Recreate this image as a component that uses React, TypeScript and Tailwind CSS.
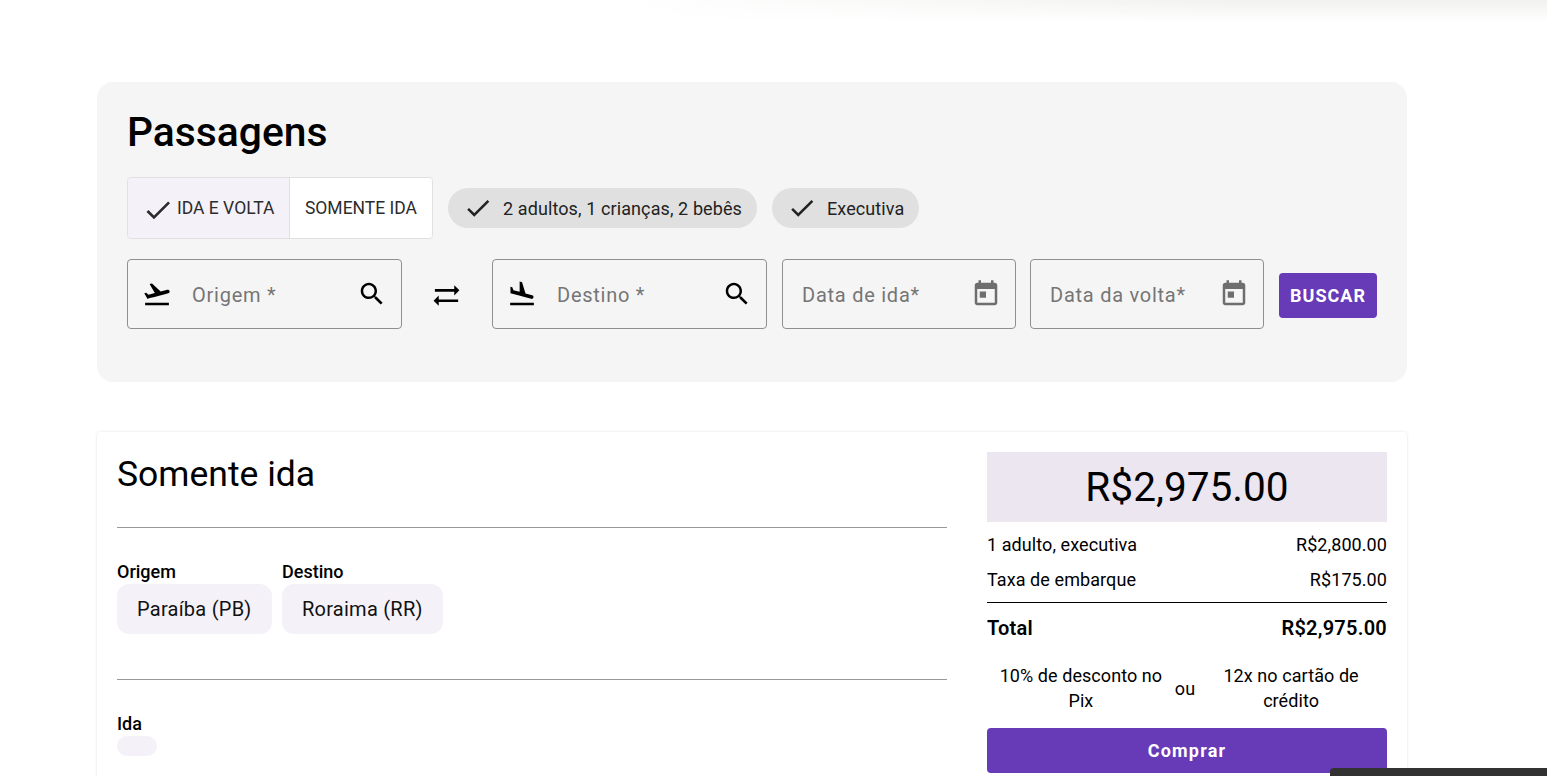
const Ic = ({ d, size, className = "" }: { d: string; size: number; className?: string }) => (
  <svg viewBox="0 0 24 24" width={size} height={size} fill="currentColor" className={"shrink-0 " + className}>
    <path d={d} />
  </svg>
);
const Check = ({ size = 30, className = "" }: { size?: number; className?: string }) => (
  <svg viewBox="0 0 24 24" width={size} height={size} fill="none" stroke="currentColor" strokeWidth={2} className={"shrink-0 " + className}>
    <path d="M4.1 12.7 9 17.6 20.3 6.3" />
  </svg>
);
const TAKEOFF = "M2.5 19h19v2h-19v-2zm19.57-9.36c-.21-.8-1.04-1.28-1.84-1.06L14.92 10l-6.9-6.43-1.93.51 4.14 7.17-4.97 1.33-1.97-1.54-1.45.39 2.59 4.49s7.12-1.9 16.57-4.43c.81-.23 1.28-1.05 1.07-1.85z";
const LAND = "M2.5 19h19v2h-19v-2zm7.18-5.73l4.35 1.16 5.31 1.42c.8.21 1.62-.26 1.84-1.06.21-.8-.26-1.62-1.06-1.84l-5.31-1.42-2.76-9.02L10.12 2v8.28L5.15 8.95l-.93-2.32-1.45-.39v5.17l1.6.43 5.31 1.43z";
const SEARCH = "M15.5 14h-.79l-.28-.27C15.41 12.59 16 11.11 16 9.5 16 5.91 13.09 3 9.5 3S3 5.91 3 9.5 5.91 16 9.5 16c1.61 0 3.09-.59 4.23-1.57l.27.28v.79l5 4.99L20.49 19l-4.99-5zm-6 0C7.01 14 5 11.99 5 9.5S7.01 5 9.5 5 14 7.01 14 9.5 11.99 14 9.5 14z";
const SYNC = "M22 8l-4-4v3H3v2h15v3zM2 16l4 4v-3h15v-2H6v-3z";
const CAL = "M19 3h-1V1h-2v2H8V1H6v2H5c-1.11 0-1.99.9-1.99 2L3 19c0 1.1.89 2 2 2h14c1.1 0 2-.9 2-2V5c0-1.1-.9-2-2-2zm0 16H5V8h14v11zM7 10h5v5H7z";

const Place = ({ icon, label }: { icon: string; label: string }) => (
  <div className="w-[275px] h-[70px] border border-[#8f8f8f] rounded-[4px] flex items-center pl-[14px] pr-[14px]">
    <Ic d={icon} size={30} className="text-black" />
    <span className="ml-[20px] pt-[2px] flex-1 text-[20px] tracking-[0.75px] text-[#757575]">{label}</span>
    <Ic d={SEARCH} size={30} className="text-black" />
  </div>
);
const DateField = ({ label }: { label: string }) => (
  <div className="w-[234px] h-[70px] border border-[#8f8f8f] rounded-[4px] flex items-center pl-[19px] pr-[14px]">
    <span className="pt-[2px] flex-1 text-[20px] tracking-[0.75px] text-[#757575]">{label}</span>
    <Ic d={CAL} size={30} className="text-[#6e6e6e]" />
  </div>
);
const Chip = ({ label }: { label: string }) => (
  <div className="h-10 rounded-[20px] bg-[#e0e0e0] flex items-center pl-[15px] pr-[15px] text-[18px] tracking-[0.1px] text-[#222]">
    <Check size={30} />
    <span className="ml-[10px]">{label}</span>
  </div>
);
const Field = ({ label, value, width }: { label: string; value: string; width: string }) => (
  <div>
    <div className="text-[18px] font-medium leading-[24px] text-black">{label}</div>
    <div className={"h-[50px] pl-[20px] rounded-[12px] bg-[#f5f1f9] flex items-center text-[20px] tracking-[0.25px] text-[#111] " + width}>{value}</div>
  </div>
);
const Row = ({ a, b }: { a: string; b: string }) => (
  <div className="flex justify-between h-[35px] items-center text-[18px] tracking-[0.08px] text-black">
    <span>{a}</span>
    <span>{b}</span>
  </div>
);

export default function App() {
  return (
    <div className="relative h-[776px] overflow-hidden bg-white font-['Roboto',sans-serif] pl-[97px] pr-[140px] pt-[82px]">
      <div className="absolute top-0 left-0 right-0 h-[22px] bg-gradient-to-b from-[#f1f1ef] to-white" />
      <div className="absolute top-0 left-0 w-[1250px] h-[22px] bg-gradient-to-r from-white from-50% to-transparent" />
      <section className="relative h-[300px] rounded-[16px] bg-[#f5f5f5] px-[30px] pt-[20px]">
        <h1 className="text-[40.8px] font-medium leading-[60px] text-black">Passagens</h1>
        <div className="flex items-center gap-[15px] mt-[15px]">
          <div className="flex h-[62px] w-[306px] rounded-[4px] border border-[#e0e0e0] overflow-hidden text-[17.5px] text-[#2c2c2c]">
            <div className="w-[162px] bg-[#f5f1f9] flex items-center pl-[14px] border-r border-[#e0e0e0]">
              <Check size={32} className="mt-[3px]" />
              <span className="ml-[3px]">IDA E VOLTA</span>
            </div>
            <div className="flex-1 bg-white flex items-center justify-center">SOMENTE IDA</div>
          </div>
          <Chip label="2 adultos, 1 crianças, 2 bebês" />
          <Chip label="Executiva" />
        </div>
        <div className="flex items-center mt-[20px]">
          <Place icon={TAKEOFF} label="Origem *" />
          <div className="w-[90px] flex justify-center pt-[3px] pr-[2px]"><Ic d={SYNC} size={31} className="text-black" /></div>
          <Place icon={LAND} label="Destino *" />
          <div className="ml-[15px]"><DateField label="Data de ida*" /></div>
          <div className="ml-[14px]"><DateField label="Data da volta*" /></div>
          <button className="ml-[15px] mt-[3px] w-[98px] h-[45px] rounded-[4px] bg-[#673ab7] text-white text-[18px] font-bold tracking-[1px]">BUSCAR</button>
        </div>
      </section>
      <section className="mt-[50px] h-[700px] rounded-[4px] bg-white shadow-[0_0_3px_rgba(0,0,0,0.12)] flex px-[20px] pt-[20px] gap-[40px]">
        <div className="w-[830px]">
          <h2 className="text-[35.5px] leading-[44px] text-black">Somente ida</h2>
          <hr className="mt-[31px] border-t border-[#999]" />
          <div className="flex gap-[10px] mt-[32px]">
            <Field label="Origem" value="Paraíba (PB)" width="w-[155px]" />
            <Field label="Destino" value="Roraima (RR)" width="w-[161px]" />
          </div>
          <hr className="mt-[45px] border-t border-[#999]" />
          <div className="mt-[32px] text-[18px] font-medium leading-[24px] text-black">Ida</div>
          <div className="w-[40px] h-[20px] rounded-[10px] bg-[#f5f1f9]" />
        </div>
        <aside className="w-[400px]">
          <div className="h-[70px] bg-[#ebe6f0] flex items-center justify-center text-[40.6px] text-black">R$2,975.00</div>
          <div className="mt-[5px]">
            <Row a="1 adulto, executiva" b="R$2,800.00" />
            <Row a="Taxa de embarque" b="R$175.00" />
          </div>
          <hr className="mt-[5px] border-t border-black" />
          <div className="flex justify-between items-center h-[50px] text-[20px] font-semibold tracking-[0.25px] text-black">
            <span>Total</span>
            <span>R$2,975.00</span>
          </div>
          <div className="flex items-center mt-[10px] text-[18px] tracking-[0.07px] leading-[25px] text-black text-center">
            <div className="w-[188px]">10% de desconto no Pix</div>
            <div className="flex-1">ou</div>
            <div className="w-[192px]">12x no cartão de crédito</div>
          </div>
          <button className="mt-[15px] w-full h-[45px] rounded-[4px] bg-[#673ab7] text-white text-[18px] font-bold tracking-[1.2px]">Comprar</button>
        </aside>
      </section>
      <div className="absolute right-0 bottom-0 w-[217px] h-[8px] bg-[#323232] rounded-tl-[4px]" />
    </div>
  );
}
